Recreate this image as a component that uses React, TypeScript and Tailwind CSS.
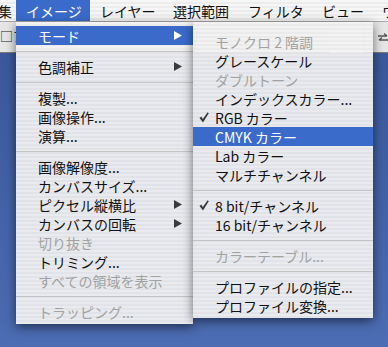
import React from 'react';

type Item = {
  label?: string;
  disabled?: boolean;
  arrow?: boolean;
  selected?: boolean;
  checked?: boolean;
  sep?: boolean;
};

const mainItems: Item[] = [
  { label: 'モード', arrow: true, selected: true },
  { sep: true },
  { label: '色調補正', arrow: true },
  { sep: true },
  { label: '複製...' },
  { label: '画像操作...' },
  { label: '演算...' },
  { sep: true },
  { label: '画像解像度...' },
  { label: 'カンバスサイズ...' },
  { label: 'ピクセル縦横比', arrow: true },
  { label: 'カンバスの回転', arrow: true },
  { label: '切り抜き', disabled: true },
  { label: 'トリミング...' },
  { label: 'すべての領域を表示', disabled: true },
  { sep: true },
  { label: 'トラッピング...', disabled: true },
];

const modeItems: Item[] = [
  { label: 'モノクロ 2 階調', disabled: true },
  { label: 'グレースケール' },
  { label: 'ダブルトーン', disabled: true },
  { label: 'インデックスカラー...' },
  { label: 'RGB カラー', checked: true },
  { label: 'CMYK カラー', selected: true },
  { label: 'Lab カラー' },
  { label: 'マルチチャンネル' },
  { sep: true },
  { label: '8 bit/チャンネル', checked: true },
  { label: '16 bit/チャンネル' },
  { sep: true },
  { label: 'カラーテーブル...', disabled: true },
  { sep: true },
  { label: 'プロファイルの指定...' },
  { label: 'プロファイル変換...' },
];

const Arrow = ({ white }: { white?: boolean }) => (
  <svg width="8" height="9" viewBox="0 0 8 9" className="ml-auto">
    <polygon points="0,0 8,4.5 0,9" fill={white ? '#ffffff' : '#3a3a3a'} />
  </svg>
);

const Check = () => (
  <svg width="10" height="11" viewBox="0 0 10 11">
    <path d="M0.5 6 L2.2 4.6 L3.8 7 L8.6 0.3 L9.8 1.2 L4 10.5 Z" fill="#3c3c3c" />
  </svg>
);

const Row = ({ item, checkSlot }: { item: Item; checkSlot?: boolean }) => {
  if (item.sep) {
    return (
      <div className="flex h-[12px] items-center">
        <div className="h-px w-full bg-[#c4c4c4]" />
      </div>
    );
  }
  const color = item.selected ? 'bg-[#3a6bcb] text-white' : item.disabled ? 'text-[#a2a2a2]' : 'text-[#111]';
  return (
    <div className={`flex h-[19px] items-center pr-[11px] text-[14px] leading-none ${color}`}>
      <div className="flex w-[22px] shrink-0 items-center pl-[6px]">{checkSlot && item.checked && <Check />}</div>
      <span className="whitespace-pre">{item.label}</span>
      {item.arrow && <Arrow white={item.selected} />}
    </div>
  );
};

const stripes =
  'bg-[repeating-linear-gradient(to_bottom,rgba(243,243,243,0.94)_0px,rgba(243,243,243,0.94)_2px,rgba(235,235,236,0.94)_2px,rgba(235,235,236,0.94)_4px)]';

export default function App() {
  const bar = [
    { t: '集', w: 'w-[16px] justify-end pr-[4px]' },
    { t: 'イメージ', w: 'w-[74px] pl-[10px] bg-[#3a6bcb] text-white' },
    { t: 'レイヤー', w: 'w-[73px] pl-[10px]' },
    { t: '選択範囲', w: 'w-[75px] pl-[10px]' },
    { t: 'フィルタ', w: 'w-[74px] pl-[10px]' },
    { t: 'ビュー', w: 'w-[60px] pl-[10px]' },
    { t: 'ウィンドウ', w: 'w-[60px] pl-[10px]' },
  ];

  return (
    <div className="relative flex h-[347px] w-[388px] flex-col overflow-hidden font-['Noto_Sans_CJK_JP',sans-serif]">
      {/* menu bar */}
      <div className="flex h-[22px] shrink-0 border-b border-[#a8a8a8] bg-[repeating-linear-gradient(to_bottom,#f6f6f6_0px,#f6f6f6_2px,#ededed_2px,#ededed_4px)] text-[14px] leading-none text-[#111]">
        {bar.map((b, i) => (
          <div key={i} className={`flex h-full shrink-0 items-center whitespace-nowrap ${b.w}`}>
            {b.t}
          </div>
        ))}
      </div>

      {/* options bar */}
      <div className="flex h-[31px] shrink-0 items-start border-b border-[#7a7a7a] bg-[#e6e6e6] text-[13px] leading-none text-[#222]">
        <div className="mt-[7px] flex-1 whitespace-nowrap">□ア</div>
        <div className="mt-[5px] h-[26px] w-[34px] border-t border-r border-[#bdbdbd] bg-[#f4f4f4]" />
        <svg width="12" height="10" viewBox="0 0 12 10" className="mt-[11px] ml-[13px] mr-[-1px]">
          <path d="M1 3 H10 M7 0.5 L10 3 M11 7 H2 M5 4.5 L2 7" stroke="#555" strokeWidth="1.3" fill="none" />
        </svg>
      </div>

      {/* desktop */}
      <div className="flex-1 bg-linear-to-b from-[#3a589a] to-[#4c6cb3]" />

      {/* Image menu */}
      <div className={`absolute left-[16px] top-[22px] w-[177px] pt-[4px] pb-[3px] shadow-[0_3px_10px_rgba(0,0,0,0.55)] ${stripes}`}>
        {mainItems.map((it, i) => (
          <Row key={i} item={it} />
        ))}
      </div>

      {/* Mode submenu */}
      <div className={`absolute left-[193px] top-[22px] w-[180px] pt-[10px] pb-[3px] shadow-[0_3px_10px_rgba(0,0,0,0.55)] ${stripes}`}>
        {modeItems.map((it, i) => (
          <Row key={i} item={it} checkSlot />
        ))}
      </div>
    </div>
  );
}
